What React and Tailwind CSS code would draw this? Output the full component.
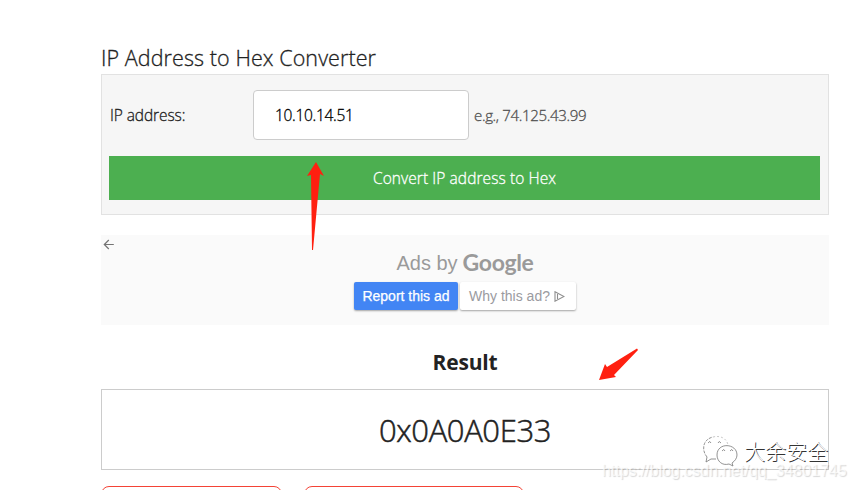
function Arrow({ className, width, height, points }) {
  return (
    <svg className={className} width={width} height={height} viewBox={`0 0 ${width} ${height}`}>
      <polygon points={points} fill="#ff2010" />
    </svg>
  );
}

function Converter() {
  return (
    <section className="mt-[15px] h-[141px] border border-[#e2e2e2] bg-[#f6f6f6] pr-2 pl-[7px] pt-[15px] [-webkit-text-stroke-width:0.3px]">
      <div className="flex h-[50px] items-center">
        <label className="w-[144px] pl-px pt-[2px] text-[15.5px] tracking-[-0.1px] text-[#222]">IP address:</label>
        <input
          className="h-[50px] w-[216px] rounded border border-[#ccc] bg-white px-[21px] text-[15.5px] tracking-[-0.3px] text-black outline-none"
          defaultValue="10.10.14.51"
        />
        <span className="ml-[5px] text-[15px] tracking-[-0.33px] text-[#505050]">e.g., 74.125.43.99</span>
      </div>
      <button className="mt-4 block h-11 w-[711px] bg-[#4caf50] pt-px text-[15.5px] tracking-[0.08px] text-white">
        Convert IP address to Hex
      </button>
    </section>
  );
}

function AdFeedback() {
  return (
    <section className="relative mt-5 flex h-[90px] flex-col items-center bg-[#fafafa] font-['Liberation_Sans',sans-serif]">
      <svg className="absolute left-[2px] top-1" width="12" height="12" viewBox="0 0 12 12" fill="none" stroke="#747474" strokeWidth="1.2">
        <path d="M10.8 5.5H1.5M5.8 1L1.3 5.5L5.8 10" />
      </svg>
      <div className="mt-[14px] flex h-[28px] items-center gap-[5px] text-[#9a9a9a]">
        <span className="text-[20px]">Ads by</span>
        <span className="pb-px font-[Lato,sans-serif] text-[23px] font-bold tracking-[-0.35px]">Google</span>
      </div>
      <div className="mt-[5px] flex gap-[2px] text-[14px]">
        <button className="h-7 w-[104px] rounded-[2px] bg-[#4285f4] text-white shadow-[0_1px_2px_rgba(0,0,0,0.35)]">
          <span className="[-webkit-text-stroke:0.25px_white]">Report this ad</span>
        </button>
        <button className="flex h-7 w-[116px] items-center justify-center gap-[4px] rounded-[2px] bg-white pr-[2px] text-[#9b9b9f] shadow-[0_1px_2px_rgba(0,0,0,0.35)]">
          <span>Why this ad?</span>
          <svg width="11" height="11" viewBox="0 0 11 11" fill="none" stroke="#8e8e8e" strokeWidth="1.1">
            <path d="M1 .8L10 5.5L1 10.2ZM3.5 3V8" />
          </svg>
        </button>
      </div>
    </section>
  );
}

function Watermarks() {
  return (
    <>
      <div className="absolute left-[602px] top-[459px] whitespace-nowrap font-['Liberation_Sans',sans-serif] text-[16px] tracking-[-0.03px] text-white/70 [text-shadow:1px_1px_1px_rgba(0,0,0,0.16)]">
        https://blog.csdn.net/qq_34801745
      </div>
      <svg className="absolute left-[702px] top-[435px]" width="38" height="32" viewBox="0 0 38 32" fill="none" stroke="#777" strokeWidth=".8">
        <path d="M5 22C-1 15 1 4 11 2" strokeDasharray="3 1.2" />
        <path d="M11 2C19 0 25 4 26 10" stroke="#bbb" strokeDasharray="2 2" />
        <path d="M5 22L4 27L9 24L14 24" />
        <path d="M15 20C15 7 35 8 35 20C35 23 33 26 30 28L31 31L27 29C20 31 15 26 15 20Z" />
        <path d="M6 8Q8 5 9 8M16 8Q17 5 19 8M20 16Q22 13 23 16M28 16Q30 13 31 16" />
      </svg>
      <div className="absolute left-[744px] top-[435px] whitespace-nowrap font-['Noto_Sans_CJK_SC',sans-serif] text-[21px] leading-[31px] text-white [text-shadow:1px_1px_0_#333]">
        大余安全
      </div>
    </>
  );
}

export default function App() {
  return (
    <main className="relative h-[490px] w-[856px] overflow-hidden bg-white font-['Open_Sans','Noto_Sans',sans-serif] font-light text-[#222]">
      <div className="ml-[101px] w-[728px] pt-[43px]">
        <h1 className="h-4 whitespace-nowrap text-[21.5px] font-light leading-[30px] tracking-[0.08px] [-webkit-text-stroke-width:0.3px]">IP Address to Hex Converter</h1>
        <Converter />
        <AdFeedback />
        <h2 className="mt-[22px] h-[30px] text-center text-[21px] font-bold leading-[30px] tracking-[-0.2px]">Result</h2>
        <output className="mt-3 flex h-[81px] items-center justify-center border border-[#ccc] pt-px text-[31px] tracking-[-0.4px] [-webkit-text-stroke-width:0.5px]">
          0x0A0A0E33
        </output>
        <div className="mt-4 flex gap-[22px]">
          <div className="h-9 w-[181px] rounded-lg border border-[#f44336]" />
          <div className="h-9 w-[220px] rounded-lg border border-[#f44336]" />
        </div>
      </div>
      <Arrow className="absolute left-[306px] top-[161px]" width={20} height={90} points="10,1 1,15 5,14 6,89 7,89 14,13 18,15" />
      <Arrow className="absolute left-[598px] top-[347px]" width={42} height={36} points="1,33 7,17 9,20 39,1.5 40,3 16,28 18,30" />
      <Watermarks />
    </main>
  );
}
